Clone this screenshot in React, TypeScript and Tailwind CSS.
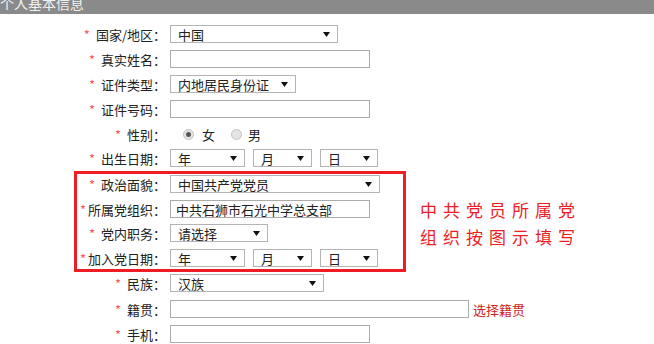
import React from 'react';

const font = { fontFamily: '"Noto Sans CJK SC", "Noto Sans", sans-serif' };

const Arrow = () => (
    <svg width="7" height="5" viewBox="0 0 7 5" className="shrink-0">
        <path d="M0 0 L7 0 L3.5 5 Z" fill="#111" />
    </svg>
);

const Select = ({ value, w }: { value: string; w: string }) => (
    <div className={`${w} h-[18px] border border-[#b4b4b4] bg-white flex items-center justify-between pl-[7px] pr-[7px] text-[13px] leading-none text-[#222] shrink-0`}>
        <span>{value}</span>
        <Arrow />
    </div>
);

const Input = ({ w, value }: { w: string; value?: string }) => (
    <div className={`${w} h-[18px] border border-[#ababab] bg-white flex items-center pl-[5px] text-[13px] leading-none text-[#222] shrink-0`}>
        {value}
    </div>
);

const Label = ({ text, w = 'w-[170px]', tight }: { text: string; w?: string; tight?: boolean }) => (
    <div className={`${w} shrink-0 pr-[4px] text-right text-[13px] leading-none text-[#222] whitespace-nowrap`}>
        <span className={`text-[#f25b5b] ${tight ? 'mr-[2px]' : 'mr-[6px]'}`}>*</span>
        {text}
    </div>
);

const DateSelects = () => (
    <div className="flex gap-[8px]">
        <Select value="年" w="w-[75px]" />
        <Select value="月" w="w-[59px]" />
        <Select value="日" w="w-[58px]" />
    </div>
);

const Radio = ({ checked }: { checked?: boolean }) => (
    <span className="w-[11px] h-[11px] rounded-full border border-[#c2c2c2] bg-[#e4e4e4] flex items-center justify-center">
        {checked && <span className="w-[5px] h-[5px] rounded-full bg-[#555]" />}
    </span>
);

export default function App() {
    return (
        <div className="w-[654px] h-[344px] bg-white overflow-hidden" style={font}>
            <div className="h-[14px] bg-[#8a8a8a] overflow-hidden">
                <div className="text-[14px] leading-[14px] text-[#f2f2f2] mt-[-4px]">个人基本信息</div>
            </div>

            <div className="flex flex-col">
                <div className="flex items-center mt-[11px]">
                    <Label text="国家/地区：" />
                    <Select value="中国" w="w-[168px]" />
                </div>
                <div className="flex items-center mt-[7px]">
                    <Label text="真实姓名：" />
                    <Input w="w-[200px]" />
                </div>
                <div className="flex items-center mt-[7px]">
                    <Label text="证件类型：" />
                    <Select value="内地居民身份证" w="w-[126px]" />
                </div>
                <div className="flex items-center mt-[7px]">
                    <Label text="证件号码：" />
                    <Input w="w-[200px]" />
                </div>
                <div className="flex items-center h-[18px] mt-[7px]">
                    <Label text="性别：" />
                    <div className="flex items-center text-[13px] leading-none text-[#222] pl-[13px]">
                        <Radio checked />
                        <span className="ml-[8px]">女</span>
                        <span className="ml-[16px]"><Radio /></span>
                        <span className="ml-[6px]">男</span>
                    </div>
                </div>
                <div className="flex items-center mt-[6px]">
                    <Label text="出生日期：" />
                    <DateSelects />
                </div>

                <div className="flex items-start mt-[4px]">
                    <div className="ml-[74px] w-[332px] border-[3px] border-[#ee1c25] pt-[1px] pb-[2px] flex flex-col">
                        <div className="flex items-center">
                            <Label text="政治面貌：" w="w-[93px]" />
                            <Select value="中国共产党党员" w="w-[210px]" />
                        </div>
                        <div className="flex items-center mt-[7px]">
                            <Label text="所属党组织：" w="w-[93px]" tight />
                            <Input w="w-[200px]" value="中共石狮市石光中学总支部" />
                        </div>
                        <div className="flex items-center mt-[6px]">
                            <Label text="党内职务：" w="w-[93px]" />
                            <Select value="请选择" w="w-[98px]" />
                        </div>
                        <div className="flex items-center mt-[7px]">
                            <Label text="加入党日期：" w="w-[93px]" tight />
                            <DateSelects />
                        </div>
                    </div>
                    <div className="ml-[14px] mt-[25px] text-[17px] leading-[27px] tracking-[6px] text-[#ee1c25]">
                        <div>中共党员所属党</div>
                        <div>组织按图示填写</div>
                    </div>
                </div>

                <div className="flex items-center mt-[2px]">
                    <Label text="民族：" />
                    <Select value="汉族" w="w-[154px]" />
                </div>
                <div className="flex items-center mt-[8px]">
                    <Label text="籍贯：" />
                    <Input w="w-[299px]" />
                    <span className="ml-[4px] text-[13px] leading-none text-[#cc2222]">选择籍贯</span>
                </div>
                <div className="flex items-center mt-[7px]">
                    <Label text="手机：" />
                    <Input w="w-[200px]" />
                </div>
            </div>
        </div>
    );
}
